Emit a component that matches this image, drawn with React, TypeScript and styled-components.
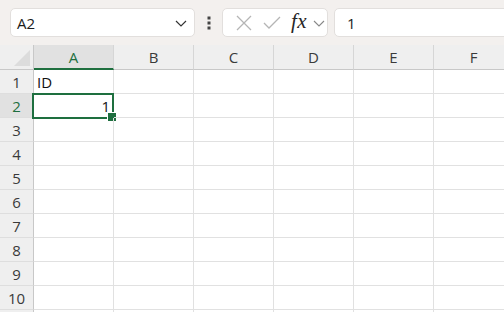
import { Fragment } from 'react'
import styled, { createGlobalStyle } from 'styled-components'

const GlobalStyle = createGlobalStyle`
  html, body { margin: 0; padding: 0; background: #ffffff; }
  body { font-family: "Open Sans", "Noto Sans", "Liberation Sans", sans-serif; overflow: hidden; }
  * { box-sizing: border-box; }
`

const Page = styled.div`
  width: 504px;
  height: 312px;
  overflow: hidden;
  display: flex;
  flex-direction: column;
`

const Toolbar = styled.div`
  height: 45px;
  flex: none;
  background: #f3f0ee;
  display: flex;
  align-items: center;
  padding: 0 0 0 10px;
`

const NameBox = styled.div`
  width: 185px;
  height: 29px;
  background: #ffffff;
  border: 1px solid #e2dfdd;
  border-radius: 5px;
  display: flex;
  align-items: center;
  justify-content: space-between;
  padding: 0 6px 0 6px;
  font-size: 15px;
  color: #1b1b1b;
`

const Dots = styled.div`
  width: 27px;
  display: flex;
  justify-content: center;
`

const FormulaButtons = styled.div`
  width: 106px;
  height: 29px;
  background: #ffffff;
  border: 1px solid #e2dfdd;
  border-radius: 5px;
  display: flex;
  align-items: center;
  padding-left: 6px;
`

const IconSlot = styled.div<{ w: number }>`
  width: ${p => p.w}px;
  display: flex;
  align-items: center;
  justify-content: center;
`

const Fx = styled.span`
  font-family: "Liberation Serif", "DejaVu Serif", serif;
  font-style: italic;
  font-size: 21px;
  line-height: 1;
  color: #262626;
  letter-spacing: 0.5px;
  margin-top: -2px;
`

const FormulaInput = styled.div`
  flex: 1;
  height: 29px;
  margin-left: 6px;
  margin-right: -8px;
  background: #ffffff;
  border: 1px solid #e2dfdd;
  border-radius: 5px;
  display: flex;
  align-items: center;
  padding-left: 12px;
  font-size: 15px;
  color: #1b1b1b;
`

const Sheet = styled.div`
  display: grid;
  grid-template-columns: 34px repeat(6, 80px);
  grid-template-rows: 25px;
  grid-auto-rows: 24px;
`

const Corner = styled.div`
  position: relative;
  background: #efefef;
  border-right: 1px solid #c8c8c8;
  border-bottom: 1px solid #c8c8c8;
  &::after {
    content: '';
    position: absolute;
    right: 3px;
    bottom: 3px;
    width: 0;
    height: 0;
    border-left: 16px solid transparent;
    border-bottom: 16px solid #dcdcdc;
  }
`

const ColHead = styled.div<{ active?: boolean }>`
  background: ${p => (p.active ? '#e1e1e1' : '#efefef')};
  border-right: 1px solid #d6d6d6;
  border-bottom: ${p => (p.active ? '2px solid #1e6f3f' : '1px solid #c8c8c8')};
  display: flex;
  align-items: center;
  justify-content: center;
  font-size: 15px;
  color: ${p => (p.active ? '#1e6f3f' : '#3a3a3a')};
  padding-bottom: ${p => (p.active ? '0' : '1px')};
`

const RowHead = styled.div<{ active?: boolean }>`
  background: ${p => (p.active ? '#e1e1e1' : '#efefef')};
  border-right: 1px solid #c8c8c8;
  border-bottom: 1px solid #dedede;
  display: flex;
  align-items: center;
  justify-content: center;
  font-size: 15px;
  color: ${p => (p.active ? '#1e6f3f' : '#3a3a3a')};
`

const Cell = styled.div<{ align?: 'left' | 'right' }>`
  position: relative;
  border-right: 1px solid #e1e1e1;
  border-bottom: 1px solid #e1e1e1;
  display: flex;
  align-items: center;
  justify-content: ${p => (p.align === 'right' ? 'flex-end' : 'flex-start')};
  padding: 0 3px;
  font-size: 15px;
  color: #111111;
`

const Selection = styled.div`
  position: absolute;
  left: -2px;
  top: -1px;
  right: -1px;
  bottom: -2px;
  border: 2px solid #1e6f3f;
  pointer-events: none;
  &::after {
    content: '';
    position: absolute;
    right: -5px;
    bottom: -5px;
    width: 8px;
    height: 8px;
    background: #1e6f3f;
    border: 1px solid #ffffff;
  }
`

const columns = ['A', 'B', 'C', 'D', 'E', 'F']
const rows = [1, 2, 3, 4, 5, 6, 7, 8, 9, 10]
const data: Record<string, { text: string, align: 'left' | 'right' }> = {
  A1: { text: 'ID', align: 'left' },
  A2: { text: '1', align: 'right' },
}

export default function App() {
  return (
    <Page>
      <GlobalStyle />
      <Toolbar>
        <NameBox>
          <span>A2</span>
          <svg width="14" height="14" viewBox="0 0 14 14">
            <path d="M2 5 L7 10 L12 5" fill="none" stroke="#333" strokeWidth="1.2" />
          </svg>
        </NameBox>
        <Dots>
          <svg width="4" height="14" viewBox="0 0 4 14">
            <rect x="0.5" y="0.5" width="3" height="3" fill="#444" />
            <rect x="0.5" y="5.5" width="3" height="3" fill="#444" />
            <rect x="0.5" y="10.5" width="3" height="3" fill="#444" />
          </svg>
        </Dots>
        <FormulaButtons>
          <IconSlot w={29}>
            <svg width="16" height="16" viewBox="0 0 16 16">
              <path d="M1 1 L15 15 M15 1 L1 15" stroke="#b5b5b5" strokeWidth="1.3" />
            </svg>
          </IconSlot>
          <IconSlot w={27}>
            <svg width="18" height="14" viewBox="0 0 18 14">
              <path d="M1 7 L6 12 L17 1" fill="none" stroke="#b5b5b5" strokeWidth="1.3" />
            </svg>
          </IconSlot>
          <IconSlot w={28}>
            <Fx>fx</Fx>
          </IconSlot>
          <svg width="12" height="10" viewBox="0 0 12 10">
            <path d="M1 3 L6 8 L11 3" fill="none" stroke="#888" strokeWidth="1.1" />
          </svg>
        </FormulaButtons>
        <FormulaInput>1</FormulaInput>
      </Toolbar>
      <Sheet>
        <Corner />
        {columns.map(c => (
          <ColHead key={c} active={c === 'A'}>{c}</ColHead>
        ))}
        {rows.map(r => (
          <Fragment key={r}>
            <RowHead active={r === 2}>{r}</RowHead>
            {columns.map(c => {
              const d = data[`${c}${r}`]
              return (
                <Cell key={`${c}${r}`} align={d?.align}>
                  {d?.text}
                  {c === 'A' && r === 2 && <Selection />}
                </Cell>
              )
            })}
          </Fragment>
        ))}
        <RowHead />
        {columns.map(c => <Cell key={`${c}11`} />)}
      </Sheet>
    </Page>
  )
}
